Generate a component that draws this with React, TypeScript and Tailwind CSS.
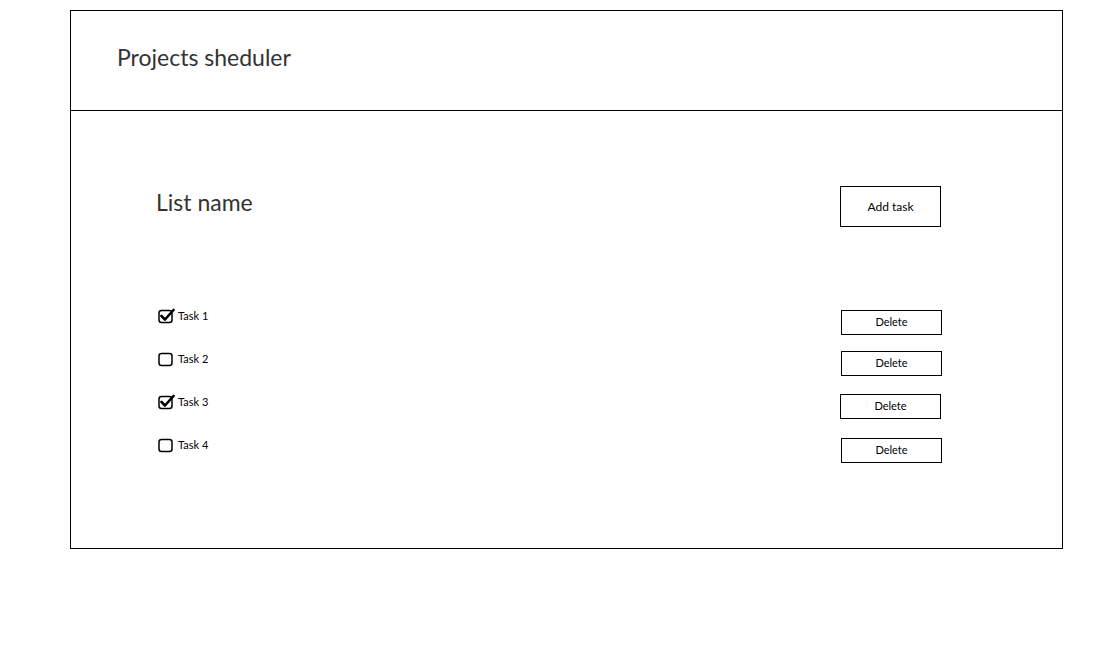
import React from "react";

function CheckBox({ checked }: { checked: boolean }) {
  return (
    <svg width="17" height="16" viewBox="0 0 17 16" className="shrink-0">
      <rect x="1" y="2.5" width="13" height="12" rx="2.5" fill="none" stroke="#000" strokeWidth="1.5" />
      {checked && (
        <path d="M3.5 8 L7 11.5 L15.5 2" fill="none" stroke="#000" strokeWidth="2.6" strokeLinecap="round" strokeLinejoin="round" />
      )}
    </svg>
  );
}

const tasks = [
  { name: "Task 1", checked: true, cls: "mt-[1px] -mr-px" },
  { name: "Task 2", checked: false, cls: "mt-[-1px] -mr-px" },
  { name: "Task 3", checked: true, cls: "mt-[-1px] mr-0" },
  { name: "Task 4", checked: false, cls: "mt-0 -mr-px" },
];

export default function App() {
  return (
    <div className="min-h-[658px] bg-white pt-[10px] pl-[70px]" style={{ fontFamily: '"Lato", "Liberation Sans", sans-serif' }}>
      <div className="w-[993px] border border-black">
        <div className="h-[100px] border-b border-black flex items-center pl-[46px] pb-[7px]">
          <h1 className="text-[23px] text-[#333]">Projects sheduler</h1>
        </div>
        <div className="h-[437px] pl-[85px] pr-[121px] pt-[75px]">
          <div className="flex items-center justify-between h-[41px]">
            <div className="text-[23px] text-[#333] -mt-[9px]">List name</div>
            <button className="w-[101px] h-[41px] border border-black text-[12px] text-black">Add task</button>
          </div>
          <div className="mt-[82px] flex flex-col">
            {tasks.map((t, i) => (
              <div key={i} className="flex justify-between h-[43px]">
                <div className="flex items-center gap-[3px] h-[14px] pl-[2px]">
                  <CheckBox checked={t.checked} />
                  <span className="text-[11px] text-black">{t.name}</span>
                </div>
                <button className={`w-[101px] h-[25px] border border-black text-[11px] text-black ${t.cls}`}>Delete</button>
              </div>
            ))}
          </div>
        </div>
      </div>
    </div>
  );
}
